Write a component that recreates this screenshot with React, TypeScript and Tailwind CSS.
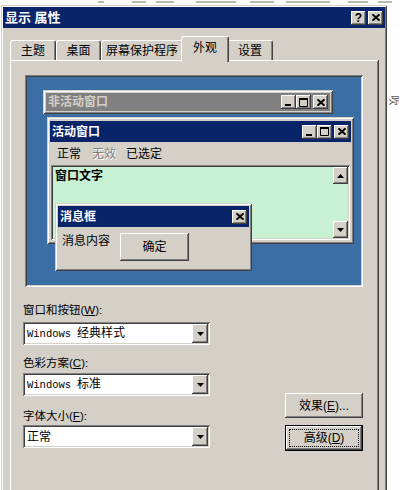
import React from 'react';

// classic win2k bevels
const frame = 'shadow-[inset_1px_1px_#d4d0c8,inset_-1px_-1px_#404040,inset_2px_2px_#ffffff,inset_-2px_-2px_#808080]';
const raised = 'shadow-[inset_-1px_-1px_#404040,inset_1px_1px_#ffffff,inset_-2px_-2px_#808080,inset_2px_2px_#d4d0c8]';
const sunken = 'shadow-[inset_1px_1px_#808080,inset_-1px_-1px_#ffffff,inset_2px_2px_#404040,inset_-2px_-2px_#d4d0c8]';

type GlyphKind = 'min' | 'max' | 'close' | 'help' | 'up' | 'down';

const Glyph: React.FC<{ k: GlyphKind }> = ({ k }) => {
  if (k === 'min') return <svg width="8" height="8" viewBox="0 0 8 8"><rect x="0" y="6" width="6" height="2" fill="#000" /></svg>;
  if (k === 'max') return <svg width="9" height="9" viewBox="0 0 9 9"><path d="M0.5 0.5h8v8h-8z" fill="none" stroke="#000" /><rect x="0" y="0" width="9" height="2" fill="#000" /></svg>;
  if (k === 'close') return <svg width="8" height="7" viewBox="0 0 8 7"><path d="M0.5 0.3L7.5 6.7M7.5 0.3L0.5 6.7" stroke="#000" strokeWidth="1.9" /></svg>;
  if (k === 'up') return <svg width="7" height="4" viewBox="0 0 7 4"><path d="M3.5 0L7 4H0z" fill="#000" /></svg>;
  if (k === 'down') return <svg width="7" height="4" viewBox="0 0 7 4"><path d="M0 0h7L3.5 4z" fill="#000" /></svg>;
  return <span className="text-[12px] font-bold leading-none">?</span>;
};

const CapBtn: React.FC<{ k: GlyphKind }> = ({ k }) => (
  <div className={`${raised} bg-[#d4d0c8] w-[15px] h-[14px] flex items-center justify-center shrink-0`}>
    <Glyph k={k} />
  </div>
);

const Tab: React.FC<{ label: string; w: string; active?: boolean }> = ({ label, w, active }) => (
  <div
    className={`${w} ${active ? 'h-[26px] -mx-[2px] mb-[-2px] relative z-10 pb-[4px]' : 'h-[20px]'} bg-[#d4d0c8] border-l border-t border-r border-white border-r-[#404040] rounded-t-[3px] shadow-[inset_-1px_0_#808080] flex items-center justify-center text-[12px]`}
  >
    {label}
  </div>
);

const Select: React.FC<{ children: React.ReactNode }> = ({ children }) => (
  <div className={`${sunken} bg-white h-[23px] flex items-center justify-between pl-[4px] pr-[2px] text-[12px]`}>
    <span className="whitespace-nowrap">{children}</span>
    <div className={`${raised} bg-[#d4d0c8] w-[16px] h-[19px] flex items-center justify-center`}>
      <Glyph k="down" />
    </div>
  </div>
);

const Win = ({ children }: { children: React.ReactNode }) => <span className="font-['Liberation_Mono',monospace] text-[10.5px] mr-[6px]">{children}</span>;

// faint marks left over from the scanned page above the dialog
const residue = [
  'ml-[98px] w-[6px]', 'ml-[28px] w-[14px]', 'ml-[10px] w-[18px]', 'ml-[22px] w-[40px]',
  'ml-[14px] w-[24px]', 'ml-[12px] w-[44px]', 'ml-[18px] w-[20px]', 'ml-[10px] w-[14px]',
];

export default function App() {
  return (
    <div className="relative w-[400px] h-[490px] overflow-hidden bg-white font-['Liberation_Sans','Noto_Sans_CJK_SC',sans-serif] text-black">
      <div className="h-[5px] flex items-start pt-[1px]">
        {residue.map((c, i) => (
          <div key={i} className={`${c} h-[2px] bg-[#b8b8b8]`} />
        ))}
      </div>

      <div className={`ml-[1px] w-[386px] h-[500px] bg-[#d4d0c8] p-[2px] ${frame}`}>
        {/* title bar */}
        <div className="h-[21px] bg-[#0a246a] flex items-center justify-between pl-[2px] pr-[2px]">
          <span className="text-white font-bold text-[13px]">显示 属性</span>
          <div className="flex gap-[2px]">
            <CapBtn k="help" />
            <CapBtn k="close" />
          </div>
        </div>

        {/* tabs */}
        <div className="mt-[6px] h-[26px] flex items-end pl-[7px]">
          <Tab label="主题" w="w-[46px]" />
          <Tab label="桌面" w="w-[45px]" />
          <Tab label="屏幕保护程序" w="w-[82px]" />
          <Tab label="外观" w="w-[48px]" active />
          <Tab label="设置" w="w-[46px]" />
        </div>

        {/* tab page */}
        <div className={`${raised} ml-[7px] w-[369px] h-[440px] bg-[#d4d0c8]`}>
          <div className="pt-[15px] pl-[15px]">
            <div className={`${sunken} relative w-[338px] h-[212px] bg-[#3a6ea5]`}>
              {/* inactive window */}
              <div className={`${frame} absolute left-[18px] top-[15px] w-[290px] h-[24px] bg-[#d4d0c8] p-[3px]`}>
                <div className="h-[18px] bg-[#808080] flex items-center justify-between pl-[2px] pr-[2px]">
                  <span className="text-[12px] font-bold text-[#d4d0c8]">非活动窗口</span>
                  <div className="flex items-center">
                    <CapBtn k="min" />
                    <CapBtn k="max" />
                    <div className="w-[2px]" />
                    <CapBtn k="close" />
                  </div>
                </div>
              </div>

              {/* active window */}
              <div className={`${frame} absolute left-[22px] top-[42px] w-[307px] h-[127px] bg-[#d4d0c8] px-[3px] pt-[4px] pb-[3px] flex flex-col`}>
                <div className="h-[21px] bg-[#0a246a] flex items-center justify-between pl-[2px] pr-[2px]">
                  <span className="text-[12px] font-bold text-white">活动窗口</span>
                  <div className="flex items-center">
                    <CapBtn k="min" />
                    <CapBtn k="max" />
                    <div className="w-[2px]" />
                    <CapBtn k="close" />
                  </div>
                </div>
                <div className="h-[23px] flex items-center text-[12px]">
                  <span className="ml-[7px]">正常</span>
                  <span className="ml-[11px] text-[#808080] [text-shadow:1px_1px_0_#ffffff]">无效</span>
                  <span className="ml-[10px]">已选定</span>
                </div>
                <div className={`${sunken} mx-[1px] h-[75px] bg-[#c8f0d2] flex justify-between`}>
                  <span className="pl-[4px] pt-[4px] text-[12px] font-bold leading-[14px]">窗口文字</span>
                  <div className="flex flex-col justify-between py-[2px] pr-[2px]">
                    <div className={`${raised} bg-[#d4d0c8] w-[15px] h-[17px] flex items-center justify-center`}>
                      <Glyph k="up" />
                    </div>
                    <div className={`${raised} bg-[#d4d0c8] w-[15px] h-[17px] flex items-center justify-center`}>
                      <Glyph k="down" />
                    </div>
                  </div>
                </div>
              </div>

              {/* message box */}
              <div className={`${frame} absolute left-[30px] top-[128px] w-[197px] h-[68px] bg-[#d4d0c8] p-[3px]`}>
                <div className="h-[21px] bg-[#0a246a] flex items-center justify-between pl-[2px] pr-[2px]">
                  <span className="text-[12px] font-bold text-white">消息框</span>
                  <CapBtn k="close" />
                </div>
                <div className="flex items-start">
                  <span className="ml-[4px] mt-[7px] text-[12px] leading-[14px]">消息内容</span>
                  <div className={`${raised} ml-[10px] mt-[6px] w-[69px] h-[28px] flex items-center justify-center text-[12px]`}>确定</div>
                </div>
              </div>
            </div>
          </div>

          {/* form */}
          <div className="flex">
            <div className="ml-[13px] w-[187px] flex flex-col">
              <div className="mt-[16px] h-[14px] leading-[14px] text-[11.5px]">窗口和按钮(<span className="underline">W</span>):</div>
              <div className="mt-[5px]"><Select><Win>Windows</Win>经典样式</Select></div>
              <div className="mt-[11px] h-[14px] leading-[14px] text-[11.5px]">色彩方案(<span className="underline">C</span>):</div>
              <div className="mt-[3px]"><Select><Win>Windows</Win>标准</Select></div>
              <div className="mt-[13px] h-[14px] leading-[14px] text-[11.5px]">字体大小(<span className="underline">F</span>):</div>
              <div className="mt-[2px]"><Select>正常</Select></div>
            </div>
            <div className="ml-[75px] flex flex-col">
              <div className={`${raised} mt-[106px] w-[78px] h-[25px] flex items-center justify-center text-[12px]`}>效果(<span className="underline">E</span>)...</div>
              <div className="mt-[7px] w-[78px] h-[26px] border border-black">
                <div className={`${raised} w-full h-full p-[3px]`}>
                  <div className="w-full h-full border border-dotted border-black flex items-center justify-center text-[12px]">
                    高级(<span className="underline">D</span>)
                  </div>
                </div>
              </div>
            </div>
          </div>
        </div>
      </div>

      <span className="absolute left-[388px] top-[93px] rotate-90 text-[10px] text-[#555]">吹</span>
    </div>
  );
}
